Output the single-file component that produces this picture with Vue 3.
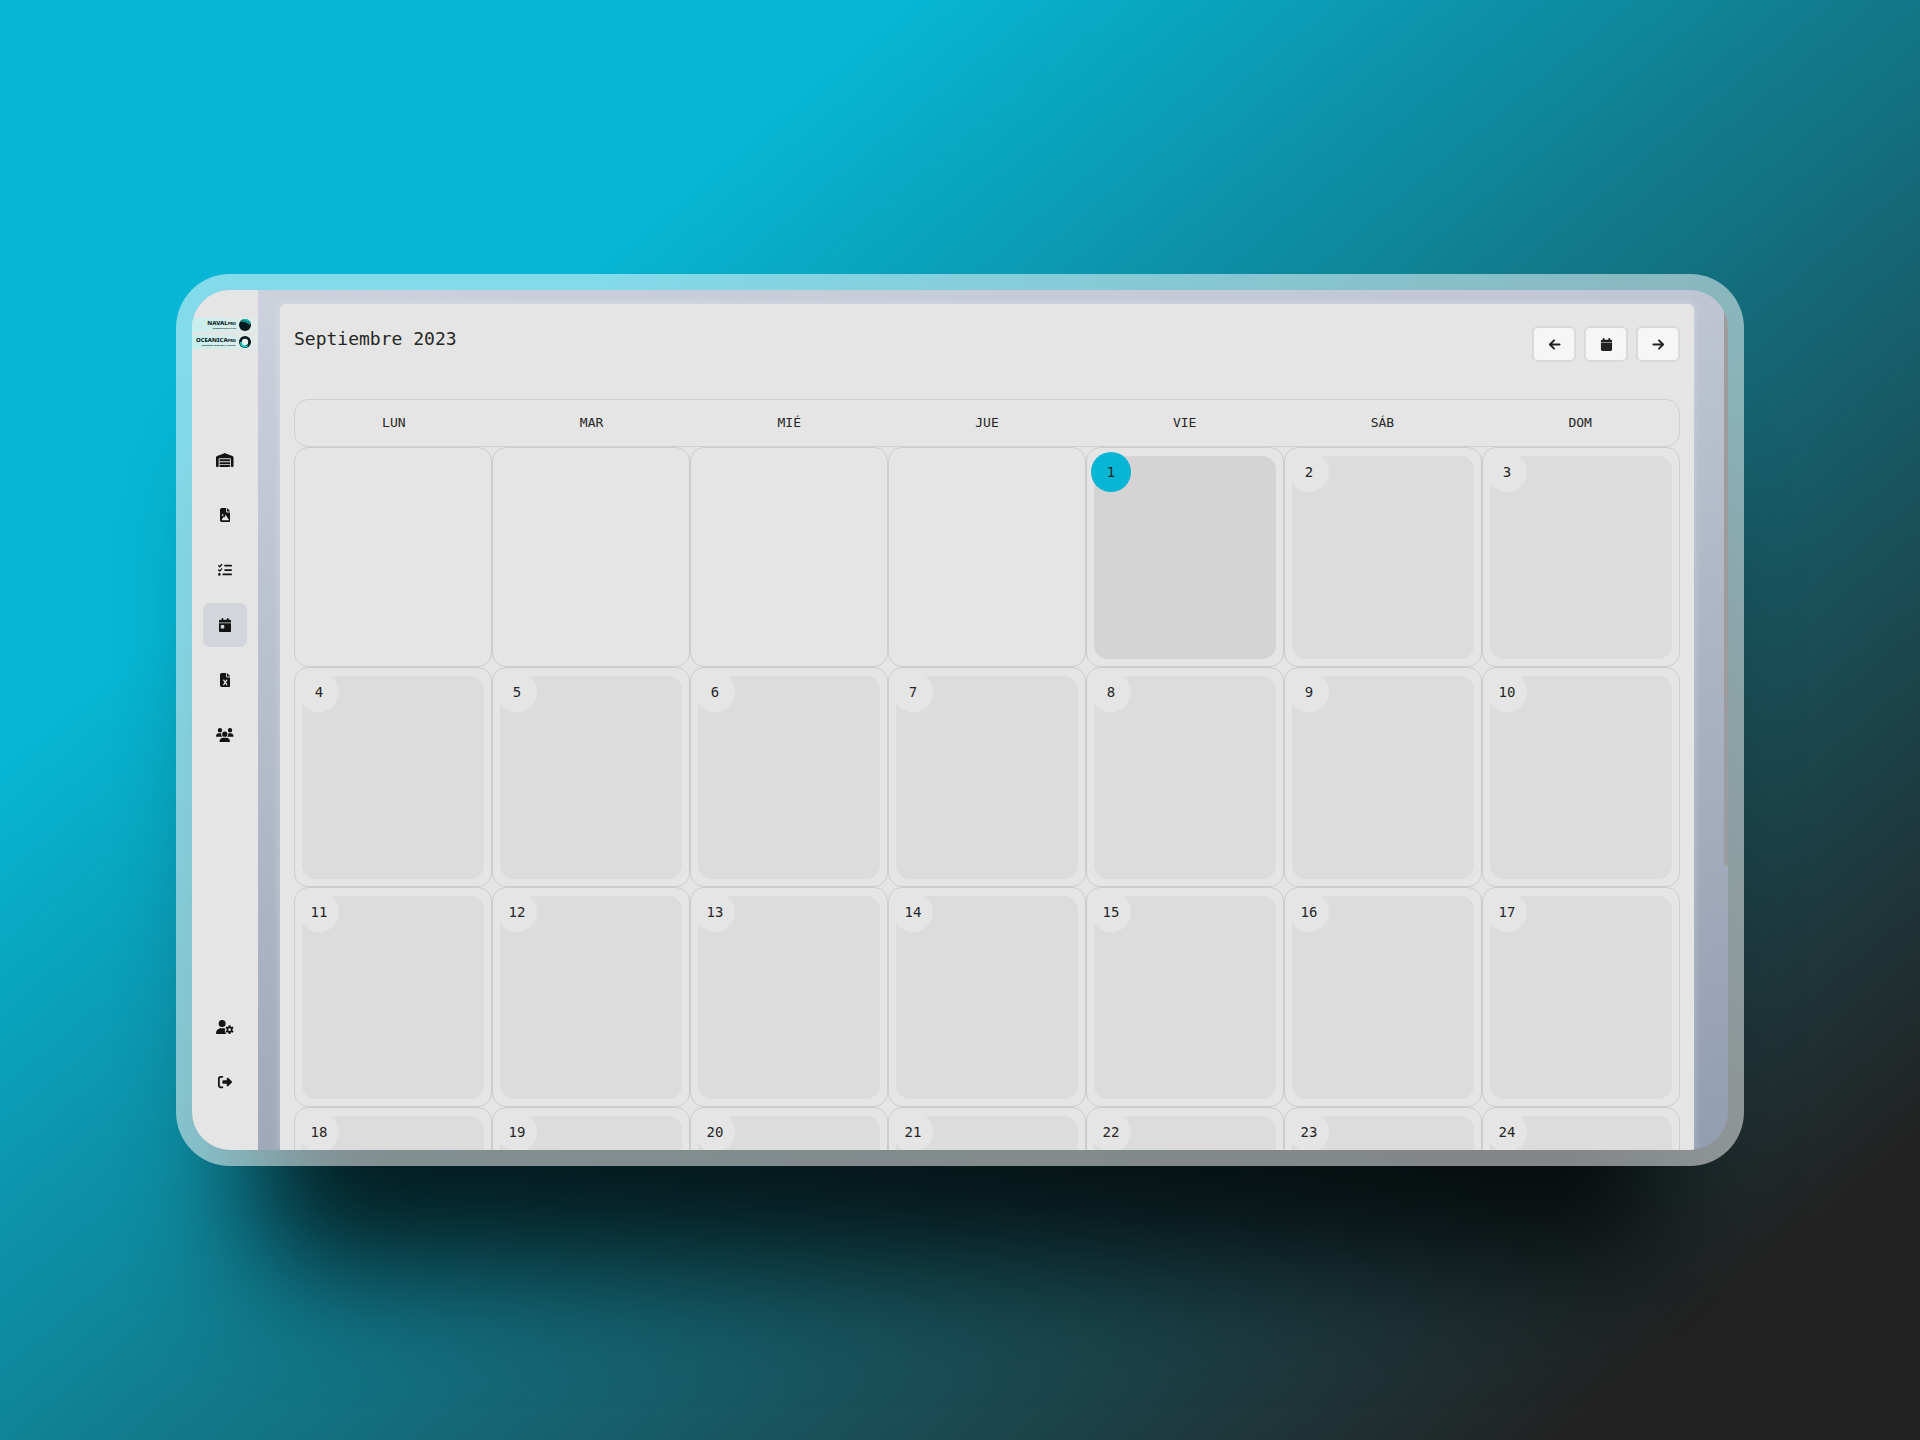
<script setup>
const weekdays = ['LUN', 'MAR', 'MIÉ', 'JUE', 'VIE', 'SÁB', 'DOM']
const weeks = Array.from({ length: 4 }, (_, w) =>
  Array.from({ length: 7 }, (_, d) => {
    const n = w * 7 + d - 3
    return n > 0 ? n : null
  })
)
const today = 1

const menu = [
  { label: 'Almacén', icon: 'warehouse' },
  { label: 'Imágenes', icon: 'image' },
  { label: 'Tareas', icon: 'tasks' },
  { label: 'Calendario', icon: 'calendar', active: true },
  { label: 'Informes', icon: 'excel' },
  { label: 'Usuarios', icon: 'users' }
]
const account = [
  { label: 'Cuenta', icon: 'userGear' },
  { label: 'Salir', icon: 'exit' }
]

const icons = {
  warehouse: {
    box: '0 0 640 512',
    d: 'M0 488V171.300c0-26.200 15.900-49.700 40.200-59.400L308.100 4.800c7.600-3.100 16.100-3.100 23.800 0L599.800 111.900c24.300 9.700 40.200 33.300 40.200 59.400V488c0 13.300-10.700 24-24 24h-48c-13.300 0-24-10.700-24-24V224c0-17.700-14.300-32-32-32H128c-17.700 0-32 14.300-32 32v264c0 13.300-10.700 24-24 24H24c-13.300 0-24-10.700-24-24zM152 512c-13.300 0-24-10.700-24-24v-56h384v56c0 13.300-10.700 24-24 24zM128 400v-64h384v64zM128 304v-80h384v80z'
  },
  image: {
    box: '0 0 384 512',
    d: 'M64 0C28.700 0 0 28.700 0 64v384c0 35.300 28.700 64 64 64h256c35.300 0 64-28.700 64-64V160H256c-17.700 0-32-14.300-32-32V0zM256 0v128h128zM64 256a32 32 0 1 1 64 0 32 32 0 1 1-64 0zM216 261l104 155c8 13 0 32-16 32H80c-16 0-24-19-14-32l56-80c9-12 27-12 36 0l11 15 27-90c4-8 16-8 20 0z'
  },
  tasks: {
    box: '0 0 512 512',
    d: 'M152 38c10 9 11 24 2 34l-72 80c-9 10-25 11-35 1L7 113C-2 104-2 88 7 79s25-9 34 0l22 22 55-61c9-10 24-11 34-2zM152 198c10 9 11 24 2 34l-72 80c-9 10-25 11-35 1L7 273c-9-9-9-25 0-34s25-9 34 0l22 22 55-61c9-10 24-11 34-2zM224 96c0-18 14-32 32-32h224a32 32 0 1 1 0 64H256c-18 0-32-14-32-32zM224 256c0-18 14-32 32-32h224a32 32 0 1 1 0 64H256c-18 0-32-14-32-32zM160 416c0-18 14-32 32-32h288a32 32 0 1 1 0 64H192c-18 0-32-14-32-32zM48 368a48 48 0 1 1 0 96 48 48 0 1 1 0-96z'
  },
  calendar: {
    box: '0 0 448 512',
    d: 'M128 0c17.700 0 32 14.300 32 32v32h128V32a32 32 0 1 1 64 0v32h48c26.500 0 48 21.500 48 48v48H0v-48c0-26.500 21.500-48 48-48h48V32c0-17.700 14.300-32 32-32zM0 192h448v272c0 26.500-21.500 48-48 48H48c-26.500 0-48-21.500-48-48zM80 256c-8.800 0-16 7.200-16 16v96c0 8.800 7.200 16 16 16h96c8.800 0 16-7.200 16-16v-96c0-8.800-7.200-16-16-16z'
  },
  excel: {
    box: '0 0 384 512',
    d: 'M64 0C28.700 0 0 28.700 0 64v384c0 35.300 28.700 64 64 64h256c35.300 0 64-28.700 64-64V160H256c-17.700 0-32-14.300-32-32V0zM256 0v128h128zM155.700 250.200L192 302l36.300-51.800c8-10.900 22.600-13.500 33.400-5.900s13.500 22.600 5.900 33.500L221.300 344l46.400 66.200c7.600 10.900 5 25.800-5.900 33.400s-25.800 5-33.400-5.800L192 385.800l-36.300 51.800c-7.600 10.900-22.600 13.500-33.400 5.900s-13.500-22.600-5.900-33.400l46.300-66.100-46.400-66.200c-7.600-10.900-5-25.800 5.900-33.400s25.800-5 33.500 5.800z'
  },
  users: {
    box: '0 0 640 512',
    d: 'M144 0a80 80 0 1 1 0 160 80 80 0 1 1 0-160zM512 0a80 80 0 1 1 0 160 80 80 0 1 1 0-160zM0 299c0-59 48-107 107-107h43c16 0 31 3 44 10-13 74 21 105 41 118H21c-12 0-21-9-21-21zM405 320c28-22 52-59 41-118 14-7 28-10 44-10h43c59 0 107 48 107 107 0 12-9 21-21 21zM224 224a96 96 0 1 1 192 0 96 96 0 1 1-192 0zM128 485c0-73 60-133 133-133h118c73 0 133 60 133 133 0 15-12 27-27 27H155c-15 0-27-12-27-27z'
  },
  userGear: {
    box: '0 0 640 512',
    d: 'M224 0a128 128 0 1 1 0 256 128 128 0 1 1 0-256zM178 304h92c25 0 49 5 70 14-32 70-15 142 42 194H30c-17 0-30-13-30-30 0-98 80-178 178-178zM465 192h62l10 50 25 14 48-17 31 54-38 34v50l38 34-31 54-48-17-25 14-10 50h-62l-10-50-25-14-48 17-31-54 38-34v-50l-38-34 31-54 48 17 25-14zM496 304a48 48 0 1 0 0 96 48 48 0 1 0 0-96z'
  },
  exit: {
    box: '0 0 512 512',
    d: 'M377.900 105.900L500.700 228.700c7.200 7.200 11.300 17.100 11.300 27.300s-4.100 20.100-11.300 27.300L377.900 406.100c-6.400 6.400-15 9.900-24 9.900-18.700 0-33.900-15.200-33.900-33.900V320H192c-17.700 0-32-14.300-32-32v-64c0-17.700 14.300-32 32-32h128v-62.100c0-18.700 15.200-33.900 33.900-33.900 9 0 17.600 3.600 24 9.900zM160 96H96c-17.700 0-32 14.300-32 32v256c0 17.700 14.300 32 32 32h64a32 32 0 1 1 0 64H96c-53 0-96-43-96-96V128c0-53 43-96 96-96h64a32 32 0 1 1 0 64z'
  }
}
</script>

<template>
  <div class="stage">
    <div class="frame">
      <div class="app">
        <aside class="sidebar">
          <div class="brands">
            <div class="brand">
              <div class="words"><b>NAVAL<small>PRO</small></b><span>SUMINISTROS NAVALES</span></div>
              <svg viewBox="0 0 12 12" aria-hidden="true"><circle cx="6" cy="6" r="6" fill="#07191c" /><path d="M1 3Q5 2 11 6L11.500 4Q10 0 6 0Q3 0 1 3z" fill="#12cfc8" /><path d="M2 2Q7 1 11 4M1 4Q6 2 11 6" fill="none" stroke="#07191c" stroke-width=".7" /></svg>
            </div>
            <div class="brand">
              <div class="words"><b>OCEANICA<small>PRO</small></b><span>INGENIERÍA MARÍTIMA Y COSTERA</span></div>
              <svg viewBox="0 0 12 12" aria-hidden="true"><circle cx="6" cy="6" r="6" fill="#07191c" /><path d="M1 6Q1 11 6 11.500Q9 11 10 9Q6 11 3 6z" fill="#12cfc8" /><circle cx="6" cy="6" r="3.200" fill="#eaf4f3" /></svg>
            </div>
          </div>
          <nav class="menu" aria-label="Principal">
            <a v-for="m in menu" :key="m.icon" href="#" :class="{ active: m.active }" :aria-label="m.label">
              <svg :viewBox="icons[m.icon].box"><path :d="icons[m.icon].d" fill-rule="evenodd" /></svg>
            </a>
          </nav>
          <nav class="menu account" aria-label="Cuenta">
            <a v-for="m in account" :key="m.icon" href="#" :aria-label="m.label">
              <svg :viewBox="icons[m.icon].box"><path :d="icons[m.icon].d" fill-rule="evenodd" /></svg>
            </a>
          </nav>
        </aside>
        <main class="content">
          <section class="panel">
            <header class="head">
              <h1>Septiembre 2023</h1>
              <div class="actions">
                <button type="button" aria-label="Mes anterior">
                  <svg viewBox="0 0 14 14" class="line"><path d="M12.500 7H2M6.500 2.500L2 7l4.500 4.500" /></svg>
                </button>
                <button type="button" aria-label="Hoy">
                  <svg viewBox="0 0 14 14"><path d="M4 0q1 0 1 1v1h4V1q0-1 1-1t1 1v1h1q1 0 1 1v1.500H1V3q0-1 1-1h1V1q0-1 1-1zM1 5.200h12V12.500q0 1.500-1.500 1.500h-9Q1 14 1 12.500z" /></svg>
                </button>
                <button type="button" aria-label="Mes siguiente">
                  <svg viewBox="0 0 14 14" class="line"><path d="M1.500 7H12M7.500 2.500L12 7l-4.500 4.500" /></svg>
                </button>
              </div>
            </header>
            <table class="calendar">
              <thead>
                <tr><th v-for="d in weekdays" :key="d" scope="col">{{ d }}</th></tr>
              </thead>
              <tbody>
                <tr v-for="(week, w) in weeks" :key="w">
                  <td v-for="(n, d) in week" :key="d">
                    <div class="cell">
                      <div v-if="n" class="day" :class="{ today: n === today }"><span>{{ n }}</span></div>
                    </div>
                  </td>
                </tr>
              </tbody>
            </table>
          </section>
          <div class="scrollbar"></div>
        </main>
      </div>
    </div>
  </div>
</template>

<style>
body {
  margin: 0;
}
</style>

<style scoped>
* {
  box-sizing: border-box;
}
.stage {
  min-height: 100vh;
  display: flex;
  align-items: center;
  justify-content: center;
  overflow: hidden;
  background: linear-gradient(140deg, #06b6d4 25%, #222 90%);
  font-family: "DejaVu Sans Mono", monospace;
  color: #262626;
}
.frame {
  position: relative;
  isolation: isolate;
  width: 82%;
  max-width: 1568px;
  padding: 16px;
  border-radius: 54px;
}
/* soft shadow that also shows through the translucent bezel */
.frame::before {
  content: "";
  position: absolute;
  z-index: -2;
  inset: 200px 80px -100px;
  border-radius: 54px;
  background: rgba(0, 0, 0, 0.78);
  filter: blur(60px);
}
.frame::after {
  content: "";
  position: absolute;
  z-index: -1;
  inset: 0;
  border-radius: 54px;
  background: rgba(255, 255, 255, 0.5);
}
.app {
  display: flex;
  aspect-ratio: 1536 / 860;
  overflow: hidden;
  border-radius: 38px;
  background: linear-gradient(170deg, #cdd2dd, #929db0);
}
.sidebar {
  flex: 0 0 66px;
  display: flex;
  flex-direction: column;
  align-items: center;
  padding: 28px 0 46px;
  background: #e5e5e5;
}
.brands {
  width: 100%;
  height: 120px;
  display: flex;
  flex-direction: column;
  gap: 3px;
}
.brand {
  height: 14px;
  padding-right: 7px;
  display: flex;
  align-items: center;
  justify-content: flex-end;
  gap: 3px;
  background: linear-gradient(90deg, #c5efed, #e3eae9);
  font-family: "Noto Sans", sans-serif;
  color: #0c2226;
}
.brand svg {
  flex: none;
  width: 12px;
  height: 12px;
}
.words {
  display: flex;
  flex-direction: column;
  align-items: flex-end;
  white-space: nowrap;
}
.words b {
  font-size: 6px;
  line-height: 6px;
  font-weight: 800;
}
.words small {
  font-size: 4px;
}
.words span {
  font-size: 2px;
  line-height: 3px;
  font-weight: 700;
}
.menu {
  display: flex;
  flex-direction: column;
  gap: 11px;
}
.menu a {
  width: 44px;
  height: 44px;
  display: grid;
  place-items: center;
  border-radius: 7px;
  fill: #141414;
}
.menu a.active {
  background: #d2d5db;
}
.menu svg {
  height: 14px;
}
.account {
  margin-top: auto;
}
.content {
  flex: 1;
  min-width: 0;
  position: relative;
  padding: 14px 34px 0 22px;
  overflow: hidden;
}
.content,
.sidebar {
  height: 100%;
}
.panel {
  padding: 22px 14px 0;
  border-radius: 6px;
  background: #e5e5e5;
  box-shadow: 0 0 8px rgba(255, 255, 255, 0.3);
}
.head {
  height: 73px;
  display: flex;
  justify-content: space-between;
  align-items: flex-start;
}
h1 {
  margin: 0;
  font-size: 18px;
  line-height: 26px;
  font-weight: 400;
}
.actions {
  display: flex;
  gap: 8px;
}
button {
  width: 44px;
  height: 36px;
  padding: 0;
  display: grid;
  place-items: center;
  border: 2px solid #dadada;
  border-radius: 6px;
  background: #f6f6f6;
  fill: #222;
}
button svg {
  width: 13px;
  height: 13px;
}
.line {
  fill: none;
  stroke: #222;
  stroke-width: 2;
  stroke-linecap: round;
  stroke-linejoin: round;
}
.calendar {
  width: 100%;
  border-spacing: 0;
  display: block;
}
thead,
tbody {
  display: block;
}
/* the last visible week runs on below the window edge */
tbody {
  margin-bottom: -200px;
}
.panel {
  height: 100%;
}
tr {
  display: grid;
  grid-template-columns: repeat(7, 1fr);
}
thead tr {
  height: 48px;
  align-items: center;
  border: 1px solid #d0d0d0;
  border-radius: 14px;
}
th {
  padding: 0;
  font-size: 13px;
  line-height: 16px;
  font-weight: 400;
}
td {
  height: 220px;
  padding: 0;
  border: 1px solid #cdcdcd;
  border-radius: 14px;
}
.cell {
  height: 100%;
  padding: 8px 7px 7px;
}
.day {
  height: 100%;
  position: relative;
  border-radius: 14px;
  background: #dcdcdc;
}
.day span {
  position: absolute;
  top: -4px;
  left: -3px;
  width: 40px;
  height: 40px;
  border-radius: 50%;
  background: #e5e5e5;
  text-align: center;
  font-size: 14px;
  line-height: 40px;
}
.day.today {
  background: #d4d4d4;
}
.day.today span {
  background: #06b6d4;
}
.panel {
  border-radius: 6px 6px 0 0;
}
.scrollbar {
  position: absolute;
  top: 0;
  right: 0;
  width: 4px;
  height: 67%;
  background: #9c9c9c;
}
</style>
